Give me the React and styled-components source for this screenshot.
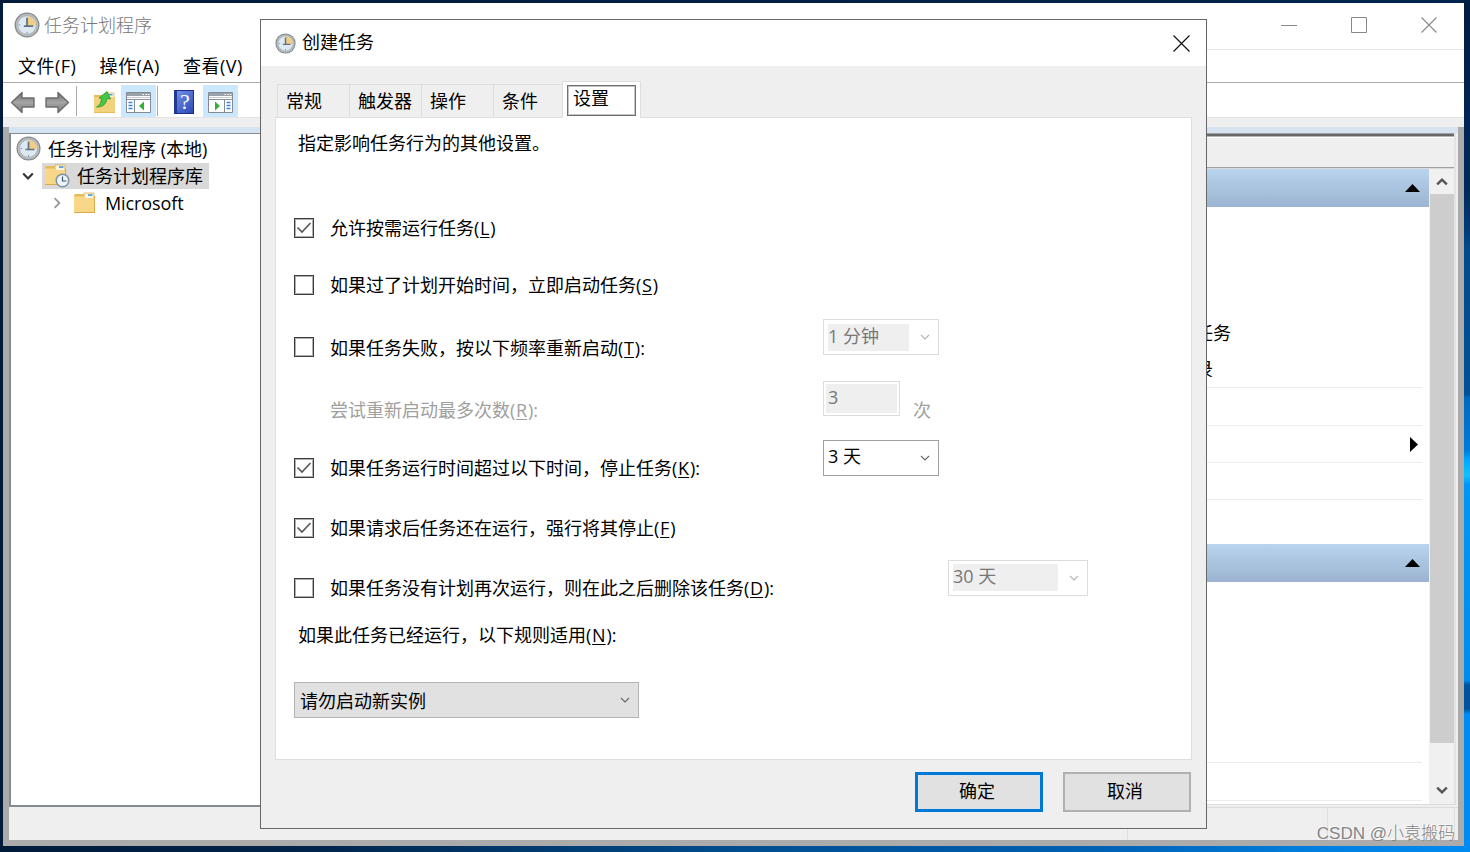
import React from 'react';
import styled, { createGlobalStyle } from 'styled-components';

const GlobalStyle = createGlobalStyle`
  * {
    box-sizing: border-box;
  }

  body {
    margin: 0;
    overflow: hidden;
    font-family: 'Open Sans', 'Noto Sans CJK SC', sans-serif;
    font-size: 18px;
    line-height: 24px;
    color: #000;
  }

  svg {
    display: block;
    flex: none;
  }
`;

const Desktop = styled.div`
  position: relative;
  width: 1470px;
  height: 852px;
  padding: 3px 6px 6px 3px;
  overflow: hidden;
  white-space: nowrap;
  background:
    linear-gradient(
        #001d42 0,
        #002a5c 190px,
        #003c78 232px,
        #014b8c 250px,
        #014f95 394px,
        #0069bf 398px,
        #007ad8 450px,
        #00a8fc 460px,
        #12c0ff 475px,
        #0096f5 485px,
        #008cee 680px,
        #00539a 685px,
        #00539a 709px,
        #008bf2 714px
      )
      right top / 6px 100% no-repeat,
    linear-gradient(to right, #001a3a, #00244d) left top / 100% 4px no-repeat,
    linear-gradient(to right, #001a3a, #002349 20%, #004f92 52%, #0061b4 75%, #0080e0 90%, #008bf2);
`;

const MainWindow = styled.div`
  display: flex;
  flex-direction: column;
  width: 1461px;
  height: 843px;
  background: #efefef;
`;

const TitleBar = styled.header`
  display: flex;
  align-items: center;
  height: 46px;
  padding: 0 0 2px 11px;
  background: #fff;
`;

const Title = styled.h1`
  flex: 1;
  margin: 0 0 0 4px;
  font-size: 18px;
  font-weight: 300;
  color: #777;
`;

const WindowButtons = styled.div`
  display: flex;
  gap: 54px;
  margin-right: 27px;
`;

const MenuBar = styled.nav`
  display: flex;
  gap: 23px;
  height: 34px;
  padding: 5px 15px;
  border-bottom: 1px solid #ababab;
  letter-spacing: 0.5px;
  background:
    linear-gradient(to right, #fff 50%, #e6e6e6 50%) top / 100% 1px no-repeat,
    #fff;
`;

const ToolBar = styled.div`
  display: flex;
  align-items: center;
  height: 35px;
  padding: 2px 0 0 7px;
  border-bottom: 1px solid #e3e3e3;
  background: #fff;
`;

const ToolButton = styled.div`
  display: flex;
  align-items: center;
  justify-content: center;
  width: ${(props) => props.$width || 35}px;
  height: 32px;
  margin-left: ${(props) => props.$gap || 0}px;
  padding-top: 2px;
  background: ${(props) => (props.$active ? '#cce8ff' : 'transparent')};
`;

const ToolDivider = styled.div`
  width: 1px;
  height: 30px;
  margin-left: ${(props) => props.$gap}px;
  background: #a9a9a9;
`;

const Workspace = styled.main`
  display: flex;
  flex: 1;
  justify-content: space-between;
  margin-top: 9px;
  padding-top: 6px;
  border: 6px solid #ababab;
  border-top: none;
  box-shadow: inset 0 6px #d6e4f1;
  background: #efefef;
`;

const TreePane = styled.aside`
  width: 400px;
  height: 674px;
  padding: 1px 0 0 3px;
  border: 2px solid #858b94;
  border-width: 1px 2px 2px;
  background: #fff;
`;

const TreeRow = styled.div`
  display: flex;
  align-items: center;
  height: 27px;
  padding-left: ${(props) => props.$indent || 0}px;
`;

const TreeLabel = styled.span`
  display: flex;
  align-items: center;
  gap: ${(props) => props.$gap || 7}px;
  height: 26px;
  margin-left: ${(props) => props.$offset || 0}px;
  padding: 0 6px 0 2px;
  letter-spacing: ${(props) => props.$spacing || '0'};
  background: ${(props) => (props.$selected ? '#d9d9d9' : 'transparent')};
`;

const ActionSide = styled.section`
  display: flex;
  flex-direction: column;
  width: 340px;
`;

const ActionPane = styled.div`
  align-self: flex-end;
  width: 258px;
  height: 672px;
  margin-right: 2px;
  padding-top: 4px;
  border-right: 2px solid #e3e3e3;
  border-bottom: 1px solid #dcdcdc;
  background:
    linear-gradient(#a0a0a0 1px, #696969 1px 3px, #b4b4b4 3px) top / 100% 4px no-repeat,
    #fff;
`;

const ActionCaption = styled.div`
  height: 30px;
  margin-top: 1px;
  border-bottom: 1px solid #a0a0a0;
  box-shadow: 0 1px #dadada;
  background: #efefef;
`;

const ActionBody = styled.div`
  display: flex;
  height: 635px;
  margin-top: 1px;
`;

const ActionList = styled.div`
  width: 231px;
  overflow: hidden;
`;

const GroupHeader = styled.div`
  display: flex;
  align-items: center;
  justify-content: flex-end;
  height: 38px;
  padding-right: 9px;
  background: linear-gradient(#b9d4ee, #9bb3d0);
`;

const ActionItem = styled.div`
  display: flex;
  align-items: center;
  justify-content: ${(props) => (props.$submenu ? 'flex-end' : 'flex-start')};
  height: ${(props) => props.$height}px;
  margin: 0 7px 0 -3px;
  padding-right: 4px;
  border-bottom: ${(props) => (props.$ruled ? '1px solid #ececec' : 'none')};
`;

const ScrollBar = styled.div`
  display: flex;
  flex-direction: column;
  width: 25px;
  padding-left: 1px;
  background: #f0f0f0;
`;

const ScrollArrow = styled.div`
  display: flex;
  align-items: center;
  justify-content: center;
  height: 25px;
`;

const ScrollThumb = styled.div`
  height: 549px;
  margin-bottom: 34px;
  background: #cdcdcd;
`;

const StatusBar = styled.div`
  display: flex;
  flex: 1;
  gap: 199px;
  margin-top: 2px;
  padding-left: 9px;
  border-top: 1px solid #dcdcdc;
`;

const StatusDivider = styled.span`
  width: 1px;
  background: #dedede;

  &:last-child {
    margin-left: -73px;
  }
`;

const Dialog = styled.div`
  position: absolute;
  top: 19px;
  left: 260px;
  display: flex;
  flex-direction: column;
  width: 947px;
  height: 810px;
  border: 1px solid #676767;
  background: #efefef;
`;

const DialogTitle = styled.header`
  display: flex;
  align-items: center;
  height: 46px;
  padding: 0 16px 0 14px;
  background: #fff;

  & span {
    flex: 1;
    margin: -2px 0 0 6px;
  }
`;

const TabList = styled.div`
  display: flex;
  align-items: flex-end;
  height: 51px;
  padding-left: 16px;
`;

const Tab = styled.div`
  width: ${(props) => props.$width || 72}px;
  height: 33px;
  padding: 4px 0 0 8px;
  border: 1px solid #dedede;
  border-width: 1px 0 0 1px;
`;

const ActiveTab = styled.div`
  z-index: 1;
  width: 79px;
  height: 37px;
  margin-bottom: -1px;
  padding: 3px 4px;
  border: 1px solid #dedede;
  border-bottom: none;
  background: #fff;

  & span {
    display: block;
    height: 31px;
    padding: 0 0 0 5px;
    border: 1px solid #6e6e6e;
    box-shadow: inset 0 0 0 1px #c4c4c4;
  }
`;

const Panel = styled.div`
  width: 917px;
  height: 643px;
  margin-left: 14px;
  padding-left: 18px;
  border: 1px solid #dedede;
  background: #fff;
`;

const Row = styled.div`
  display: flex;
  align-items: center;
  height: ${(props) => props.$height}px;
  padding-left: ${(props) => props.$indent || 0}px;
  margin-bottom: ${(props) => props.$after || 0}px;
`;

const CheckBox = styled.span`
  display: flex;
  align-items: center;
  justify-content: center;
  width: 20px;
  height: 20px;
  margin-right: 16px;
  margin-bottom: 1px;
  border: 1px solid #3c3c3c;
  box-shadow: inset 0 0 0 1px #b0b0b0;
  background: #fff;
`;

const Label = styled.label`
  width: ${(props) => props.$width || 493}px;
  color: ${(props) => (props.$disabled ? '#a0a0a0' : '#000')};

  & u {
    padding: 0 0.8px;
    text-underline-offset: 2px;
    text-decoration-thickness: 1px;
  }
`;

const Combo = styled.div`
  display: flex;
  align-items: center;
  justify-content: space-between;
  width: ${(props) => props.$width || 116}px;
  height: 36px;
  margin-bottom: ${(props) => (props.$filled ? 0 : 21)}px;
  padding: 0 8px 0 4px;
  border: 1px solid ${(props) => (props.$disabled ? '#dcdcdc' : props.$filled ? '#b4b4b4' : '#a0a0a0')};
  color: ${(props) => (props.$disabled ? '#777' : '#000')};
  background: ${(props) => (props.$filled ? '#e1e1e1' : '#fff')};
`;

const ComboText = styled.span`
  flex: 1;
  height: 27px;
  margin-right: 11px;
  line-height: ${(props) => (props.$filled ? 28 : 25)}px;
  padding-left: ${(props) => (props.$filled ? 1 : 0)}px;
  background: ${(props) => (props.$disabled ? '#efefef' : 'transparent')};
`;

const CountInput = styled.div`
  width: 77px;
  height: 35px;
  margin-bottom: 23px;
  padding: 2px;
  border: 1px solid #dcdcdc;

  & span {
    display: block;
    height: 29px;
    padding-left: 2px;
    line-height: 27px;
    color: #777;
    background: #efefef;
  }
`;

const Unit = styled.span`
  margin-left: 13px;
  color: #a0a0a0;
`;

const DialogActions = styled.footer`
  display: flex;
  justify-content: flex-end;
  gap: 20px;
  padding: 12px 15px 0 0;
`;

const Button = styled.button`
  width: 128px;
  height: 40px;
  padding: 0 4px 2px 0;
  border: ${(props) => (props.$primary ? '3px solid #0078d7' : '2px solid #b0b0b0')};
  font: inherit;
  color: #000;
  background: #e1e1e1;
`;

const Watermark = styled.div`
  position: absolute;
  right: 15px;
  bottom: 6px;
  font-family: 'Liberation Sans', 'Noto Sans CJK SC', sans-serif;
  font-size: 17px;
  font-weight: 300;
  color: #858585;
  text-shadow: -1px -1px 0 #fafafa;
`;

const ClockIcon = ({ size }) => (
  <svg width={size} height={size} viewBox="0 0 25 25">
    <circle cx="12.5" cy="12.5" r="12" fill="#85898b" />
    <circle cx="12.5" cy="12.5" r="10.8" fill="#b9bdbf" />
    <circle cx="12.5" cy="12.5" r="9" fill="#dde9f1" stroke="#a3abb0" strokeWidth="0.8" />
    <path d="M12.500 4a8.500 8.500 0 0 1 8.500 9h-8.500z" fill="#f2cd86" />
    <path d="M12.500 5.500v8M9.500 13.500h9" fill="none" stroke="#5d7382" strokeWidth="1.700" />
    <path d="M12.500 19v2M4.500 12.500h1.600" stroke="#8b9aa5" />
  </svg>
);

const FolderShape = () => (
  <>
    <path d="M1 3.500L2 2h9l1.500 2H22v17H1z" fill="#e8bd58" />
    <path d="M11 1h10v6H11z" fill="#fdf6dc" stroke="#d8ab4a" strokeWidth="0.8" />
    <path d="M15 2.200h4.500v1.700H15z" fill="#4b9ee0" />
    <path d="M1 4.500h9.500L12 6.500h10V20H1z" fill="#f8d888" />
    <path d="M1 20.500h21M21.500 5v15" stroke="#d9a94b" />
  </>
);

const FolderIcon = () => (
  <svg width="23" height="22" viewBox="0 0 23 22">
    <FolderShape />
  </svg>
);

const LibraryIcon = () => (
  <svg width="26" height="24" viewBox="0 0 26 24">
    <FolderShape />
    <circle cx="18.5" cy="16.500" r="7" fill="#7d929e" />
    <circle cx="18.5" cy="16.500" r="5.500" fill="#eaf4fa" />
    <path d="M18.500 12.500v4.500h4" fill="none" stroke="#3f5668" strokeWidth="1.200" />
  </svg>
);

const UpFolderIcon = () => (
  <svg width="23" height="24" viewBox="0 0 23 24">
    <path d="M1 5h9l1 2h11v16H1z" fill="#e8bd58" />
    <path d="M13 3h8v5h-8z" fill="#fdfdf8" stroke="#d8ab4a" strokeWidth="0.8" />
    <path d="M15.500 4h4v1.500h-4z" fill="#4b9ee0" />
    <path d="M1 7h21v15H1z" fill="#f3d27e" />
    <path
      d="M3.500 17c4-2 4.500-5 5-8.500L6 8l8-6.500 3.500 7.500-3.500-.5c-.5 5-4 9-10.500 8.500z"
      fill="#45c545"
      stroke="#249a2c"
      strokeWidth="0.8"
    />
  </svg>
);

const ArrowIcon = ({ flip }) => (
  <svg width="26" height="23" viewBox="0 0 26 23">
    <defs>
      <linearGradient id="steel" x1="0" y1="0" x2="0" y2="1">
        <stop offset="0" stopColor="#6e6e6e" />
        <stop offset="0.5" stopColor="#a5a5a5" />
        <stop offset="1" stopColor="#7a7a7a" />
      </linearGradient>
    </defs>
    <path
      d="M1.500 11.500L12 1.500V7h12v9H12v5.500z"
      fill="url(#steel)"
      stroke="#6c6c6c"
      strokeWidth="1.400"
      strokeLinejoin="round"
      transform={flip ? 'matrix(-1 0 0 1 26 0)' : undefined}
    />
  </svg>
);

// "right" puts the list column on the right and turns the arrow round
const PaneIcon = ({ right }) => (
  <svg width="25" height="21" viewBox="0 0 25 21">
    <path d="M.5.5h24v20H.5z" fill="#fff" stroke="#838a93" />
    <path d="M1 1h23v3H1z" fill="#9aa1a9" />
    <path d="M16.500 2.500H18M19.500 2.500H21M22 2.500h1.500" stroke="#fff" />
    <path d="M1 5.500h23" stroke="#c9cdd2" />
    <path d="M1 7.500h23" stroke="#8b929b" />
    <path d={right ? 'M16.500 8v12' : 'M8.500 8v12'} stroke="#838a93" />
    <path
      d={right ? 'M18.500 10.500h4M18.500 13.500h4M18.500 16.500h4' : 'M2.500 10.500h4M2.500 13.500h4M2.500 16.500h4'}
      stroke="#3d86d8"
      strokeWidth="1.400"
    />
    <path d={right ? 'M7 9.500l5 4.500-5 4.500z' : 'M18 9.500l-5 4.500 5 4.500z'} fill="#36ad35" />
  </svg>
);

const HelpGlyph = styled.div`
  display: flex;
  align-items: center;
  justify-content: center;
  width: 20px;
  height: 24px;
  border: 1px solid #1c2c86;
  border-left: 3px solid #233890;
  font: 22px 'Liberation Serif', serif;
  color: #fff;
  background: linear-gradient(135deg, #6f8fe6, #2b49b5);
`;

const CloseIcon = ({ size, color }) => (
  <svg width={size} height={size} viewBox="0 0 16 16">
    <path d="M.5.5l15 15M15.500.5l-15 15" stroke={color} strokeWidth="1.100" />
  </svg>
);

const Chevron = ({ width = 9, color = '#777', turn = 0, weight = 1.1 }) => (
  <svg width={width} height={width} viewBox="0 0 10 10">
    <path d="M1 3l4 4 4-4" fill="none" stroke={color} strokeWidth={weight} transform={`rotate(${turn} 5 5)`} />
  </svg>
);

const Triangle = ({ right }) => (
  <svg width={right ? 8 : 15} height={right ? 15 : 8} viewBox={right ? '0 0 8 15' : '0 0 15 8'}>
    <path d={right ? 'M0 0l8 7.500L0 15z' : 'M0 8l7.500-8L15 8z'} />
  </svg>
);

const Check = ({ checked }) => (
  <CheckBox>
    {checked && (
      <svg width="16" height="14" viewBox="0 0 16 14">
        <path d="M1.500 6.500L6 11l8.500-9" fill="none" stroke="#5a5a5a" strokeWidth="1.700" />
      </svg>
    )}
  </CheckBox>
);

const Select = ({ value, width, disabled, filled }) => (
  <Combo $width={width} $disabled={disabled} $filled={filled}>
    <ComboText $disabled={disabled} $filled={filled}>
      {value}
    </ComboText>
    <Chevron width={10} color={disabled ? '#b5b5b5' : '#666'} />
  </Combo>
);

const SettingsPanel = () => (
  <Panel>
    <Row $height={50} $indent={4} $after={34}>
      指定影响任务行为的其他设置。
    </Row>
    <Row $height={52}>
      <Check checked />
      <Label>
        允许按需运行任务(<u>L</u>)
      </Label>
    </Row>
    <Row $height={62}>
      <Check />
      <Label>
        如果过了计划开始时间，立即启动任务(<u>S</u>)
      </Label>
    </Row>
    <Row $height={63}>
      <Check />
      <Label>
        如果任务失败，按以下频率重新启动(<u>T</u>):
      </Label>
      <Select value="1 分钟" disabled />
    </Row>
    <Row $height={62} $indent={36}>
      <Label $disabled>
        尝试重新启动最多次数(<u>R</u>):
      </Label>
      <CountInput>
        <span>3</span>
      </CountInput>
      <Unit>次</Unit>
    </Row>
    <Row $height={54}>
      <Check checked />
      <Label>
        如果任务运行时间超过以下时间，停止任务(<u>K</u>):
      </Label>
      <Select value="3 天" />
    </Row>
    <Row $height={66}>
      <Check checked />
      <Label>
        如果请求后任务还在运行，强行将其停止(<u>F</u>)
      </Label>
    </Row>
    <Row $height={54}>
      <Check />
      <Label $width={618}>
        如果任务没有计划再次运行，则在此之后删除该任务(<u>D</u>):
      </Label>
      <Select value="30 天" width={140} disabled />
    </Row>
    <Row $height={40} $indent={4} $after={27}>
      <Label>
        如果此任务已经运行，以下规则适用(<u>N</u>):
      </Label>
    </Row>
    <Select value="请勿启动新实例" width={345} filled />
  </Panel>
);

const CreateTaskDialog = () => (
  <Dialog>
    <DialogTitle>
      <ClockIcon size={21} />
      <span>创建任务</span>
      <CloseIcon size={17} color="#111" />
    </DialogTitle>
    <TabList>
      <Tab>常规</Tab>
      <Tab>触发器</Tab>
      <Tab>操作</Tab>
      <Tab $width={69}>条件</Tab>
      <ActiveTab>
        <span>设置</span>
      </ActiveTab>
    </TabList>
    <SettingsPanel />
    <DialogActions>
      <Button $primary>确定</Button>
      <Button>取消</Button>
    </DialogActions>
  </Dialog>
);

const App = () => {
  return (
    <Desktop>
      <GlobalStyle />
      <MainWindow>
        <TitleBar>
          <ClockIcon size={26} />
          <Title>任务计划程序</Title>
          <WindowButtons>
            <svg width="16" height="16" viewBox="0 0 16 16">
              <path d="M0 8.500h16" stroke="#888" />
            </svg>
            <svg width="16" height="16" viewBox="0 0 16 16">
              <path d="M.5.5h15v15H.5z" fill="none" stroke="#888" />
            </svg>
            <CloseIcon size={16} color="#888" />
          </WindowButtons>
        </TitleBar>
        <MenuBar>
          <span>文件(F)</span>
          <span>操作(A)</span>
          <span>查看(V)</span>
        </MenuBar>
        <ToolBar>
          <ToolButton $width={26}>
            <ArrowIcon />
          </ToolButton>
          <ToolButton $width={26} $gap={8}>
            <ArrowIcon flip />
          </ToolButton>
          <ToolDivider $gap={6} />
          <ToolButton $width={24} $gap={15}>
            <UpFolderIcon />
          </ToolButton>
          <ToolButton $gap={5} $active>
            <PaneIcon />
          </ToolButton>
          <ToolDivider $gap={1} />
          <ToolButton $width={24} $gap={14}>
            <HelpGlyph>?</HelpGlyph>
          </ToolButton>
          <ToolButton $gap={7} $active>
            <PaneIcon right />
          </ToolButton>
        </ToolBar>
        <Workspace>
          <TreePane>
            <TreeRow>
              <TreeLabel>
                <ClockIcon size={25} />
                任务计划程序 (本地)
              </TreeLabel>
            </TreeRow>
            <TreeRow $indent={8}>
              <Chevron width={12} color="#333" weight={1.8} />
              <TreeLabel $offset={8} $selected>
                <LibraryIcon />
                任务计划程序库
              </TreeLabel>
            </TreeRow>
            <TreeRow $indent={37}>
              <Chevron width={12} color="#999" turn={-90} weight={1.5} />
              <TreeLabel $offset={8} $gap={9} $spacing="-0.1px">
                <FolderIcon />
                Microsoft
              </TreeLabel>
            </TreeRow>
          </TreePane>
          <ActionSide>
            <ActionPane>
              <ActionCaption />
              <ActionBody>
                <ActionList>
                  <GroupHeader>
                    <Triangle />
                  </GroupHeader>
                  <ActionItem $height={108} />
                  <ActionItem $height={36}>任务</ActionItem>
                  <ActionItem $height={37} $ruled>
                    录
                  </ActionItem>
                  <ActionItem $height={38} $ruled />
                  <ActionItem $height={37} $ruled $submenu>
                    <Triangle right />
                  </ActionItem>
                  <ActionItem $height={37} $ruled />
                  <ActionItem $height={44} />
                  <GroupHeader>
                    <Triangle />
                  </GroupHeader>
                  <ActionItem $height={181} $ruled />
                  <ActionItem $height={38} $ruled />
                </ActionList>
                <ScrollBar>
                  <ScrollArrow>
                    <Chevron width={12} color="#555" turn={180} weight={2} />
                  </ScrollArrow>
                  <ScrollThumb />
                  <ScrollArrow>
                    <Chevron width={12} color="#555" weight={2} />
                  </ScrollArrow>
                </ScrollBar>
              </ActionBody>
            </ActionPane>
            <StatusBar>
              <StatusDivider />
              <StatusDivider />
              <StatusDivider />
            </StatusBar>
          </ActionSide>
        </Workspace>
      </MainWindow>
      <CreateTaskDialog />
      <Watermark>CSDN @小袁搬码</Watermark>
    </Desktop>
  );
};

export default App;
